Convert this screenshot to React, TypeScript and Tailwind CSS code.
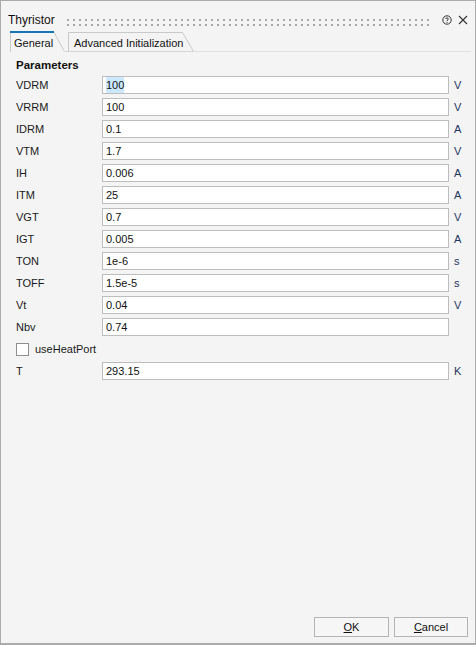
import React from "react";

type Row = { label: string; value: string; unit?: string; selected?: boolean };

const ROWS: Row[] = [
  { label: "VDRM", value: "100", unit: "V", selected: true },
  { label: "VRRM", value: "100", unit: "V" },
  { label: "IDRM", value: "0.1", unit: "A" },
  { label: "VTM", value: "1.7", unit: "V" },
  { label: "IH", value: "0.006", unit: "A" },
  { label: "ITM", value: "25", unit: "A" },
  { label: "VGT", value: "0.7", unit: "V" },
  { label: "IGT", value: "0.005", unit: "A" },
  { label: "TON", value: "1e-6", unit: "s" },
  { label: "TOFF", value: "1.5e-5", unit: "s" },
  { label: "Vt", value: "0.04", unit: "V" },
  { label: "Nbv", value: "0.74" },
];

function Field({ row }: { row: Row }) {
  return (
    <div className="flex items-center h-[18px]">
      <div className="w-[86px] text-[11px] text-[#1a1a1a]">{row.label}</div>
      <div className="w-[347px] h-[18px] border border-[#bdbdbd] bg-white flex items-center pl-[3px] text-[11px] text-[#111]">
        {row.selected ? <span className="bg-[#cce8ff]">{row.value}</span> : row.value}
      </div>
      {row.unit && <div className="ml-[5px] text-[11px] text-[#1f3460]">{row.unit}</div>}
    </div>
  );
}

function Dots() {
  return (
    <svg width="364" height="8" className="block">
      <defs>
        <pattern id="grip" width="6" height="5" patternUnits="userSpaceOnUse">
          <rect x="0" y="0" width="2" height="2" fill="#a8a8a8" />
        </pattern>
      </defs>
      <rect x="0" y="0" width="364" height="7" fill="url(#grip)" />
    </svg>
  );
}

export default function App() {
  return (
    <div
      className="w-[476px] h-[645px] bg-[#f4f4f4] border border-b-2 border-[#ababab] flex flex-col"
      style={{ fontFamily: '"Liberation Sans", Arial, sans-serif' }}
    >
      {/* title bar */}
      <div className="flex items-center h-[18px] mt-[10px] pl-[7px] pr-[7px]">
        <span className="text-[12px] text-[#111] w-[59px]">Thyristor</span>
        <div className="pt-[5px]">
          <Dots />
        </div>
        <div className="flex-1" />
        <svg width="10" height="10" viewBox="0 0 10 10" className="mr-[6px]">
          <circle cx="5" cy="5" r="4.2" fill="none" stroke="#333" strokeWidth="1" />
          <path d="M3.6 4 C3.6 2.6 6.4 2.6 6.4 4 C6.4 4.9 5 4.9 5 6" fill="none" stroke="#333" strokeWidth="1" />
          <rect x="4.5" y="6.8" width="1" height="1" fill="#333" />
        </svg>
        <svg width="10" height="10" viewBox="0 0 10 10">
          <path d="M1 1 L9 9 M9 1 L1 9" stroke="#333" strokeWidth="1.1" />
        </svg>
      </div>

      {/* tabs */}
      <div className="flex items-end h-[22px] mt-[1px] pl-[9px] pr-[4px]">
        <div className="relative w-[55px] h-[22px]">
          <svg width="55" height="22" className="absolute inset-0">
            <path d="M0.5 22 V1.5 H43.5 L54.5 21.5" fill="none" stroke="#c9c9c9" strokeWidth="1" />
            <rect x="0" y="1" width="44" height="2" fill="#1775b5" />
          </svg>
          <div className="relative pl-[4px] pt-[5px] text-[11px] text-[#111]">General</div>
        </div>
        <div className="w-[3px] h-[1px] bg-[#d6d6d6]" />
        <div className="relative w-[126px] h-[20px]">
          <svg width="126" height="20" className="absolute inset-0">
            <path d="M0.5 20 V0.5 H114.5 L125.5 19.5" fill="none" stroke="#c9c9c9" strokeWidth="1" />
            <rect x="0" y="19" width="126" height="1" fill="#d6d6d6" />
          </svg>
          <div className="relative pl-[6px] pt-[3px] text-[11px] text-[#111]">Advanced Initialization</div>
        </div>
        <div className="flex-1 h-[1px] bg-[#e0e0e0]" />
      </div>

      {/* parameters */}
      <div className="pl-[15px] pt-[6px]">
        <div className="text-[11.5px] font-bold text-[#111] leading-[14px]">Parameters</div>
        <div className="flex flex-col gap-[4px] mt-[4px]">
          {ROWS.map((r) => (
            <Field key={r.label} row={r} />
          ))}
          <div className="flex items-center h-[18px]">
            <div className="w-[13px] h-[13px] border border-[#8f8f8f] bg-white" />
            <span className="ml-[6px] text-[11px] text-[#1a1a1a]">useHeatPort</span>
          </div>
          <Field row={{ label: "T", value: "293.15", unit: "K" }} />
        </div>
      </div>

      {/* buttons */}
      <div className="mt-auto flex justify-end gap-[5px] pr-[7px] pb-[6px]">
        <button className="w-[75px] h-[20px] border border-[#b4b4b4] bg-[#f6f6f6] text-[11px] text-[#111]">
          <span className="underline">O</span>K
        </button>
        <button className="w-[74px] h-[20px] border border-[#b4b4b4] bg-[#f6f6f6] text-[11px] text-[#111]">
          <span className="underline">C</span>ancel
        </button>
      </div>
    </div>
  );
}
